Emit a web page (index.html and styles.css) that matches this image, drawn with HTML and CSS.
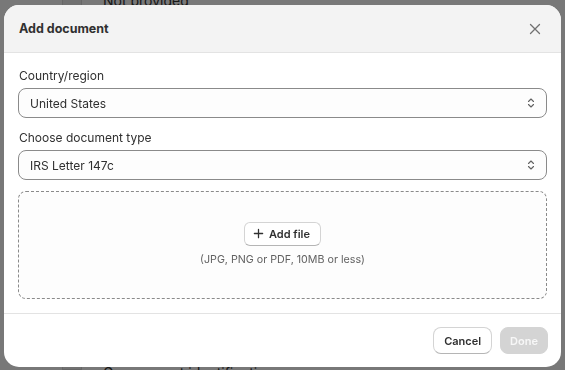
FILE: index.html
```html
<!DOCTYPE html>
<html lang="en">
<head>
  <meta charset="UTF-8" />
  <meta name="viewport" content="width=device-width, initial-scale=1.0"/>
  <title>Add document</title>
  <link rel="stylesheet" href="styles.css">
</head>
<body>
  <div class="page">
    <div class="pageRow">
      <div class="thumb"></div>
      <p>Not provided</p>
    </div>
    <div class="pageRow bottom">
      <div class="thumb"></div>
      <p>Government identification</p>
    </div>
  </div>

  <div class="overlay">
    <div class="modal">
      <div class="modalHeader">
        <h2>Add document</h2>
        <button class="closeBtn" aria-label="Close">
          <svg width="12" height="12" viewBox="0 0 12 12"><path d="M1.5 1.5l9 9M10.5 1.5l-9 9" stroke="#707070" stroke-width="1.3" stroke-linecap="round"/></svg>
        </button>
      </div>

      <div class="modalBody">
        <div class="field">
          <label>Country/region</label>
          <div class="select">
            <span>United States</span>
            <svg width="10" height="14" viewBox="0 0 10 14"><path d="M2.5 5.5L5 3l2.5 2.5M2.5 8.5L5 11l2.5-2.5" fill="none" stroke="#616161" stroke-width="1.1" stroke-linecap="round" stroke-linejoin="round"/></svg>
          </div>
        </div>

        <div class="field">
          <label>Choose document type</label>
          <div class="select">
            <span>IRS Letter 147c</span>
            <svg width="10" height="14" viewBox="0 0 10 14"><path d="M2.5 5.5L5 3l2.5 2.5M2.5 8.5L5 11l2.5-2.5" fill="none" stroke="#616161" stroke-width="1.1" stroke-linecap="round" stroke-linejoin="round"/></svg>
          </div>
        </div>

        <div class="dropzone">
          <button class="addFile">
            <svg width="11" height="11" viewBox="0 0 12 12"><path d="M6 1.5v9M1.5 6h9" stroke="#303030" stroke-width="1.4" stroke-linecap="round"/></svg>
            Add file
          </button>
          <p class="hint">(JPG, PNG or PDF, 10MB or less)</p>
        </div>
      </div>

      <div class="modalFooter">
        <button class="btn">Cancel</button>
        <button class="btn primary" disabled>Done</button>
      </div>
    </div>
  </div>
</body>
</html>
```

FILE: styles.css
```css
* {
  margin: 0;
  padding: 0;
  box-sizing: border-box;
  font-family: 'Inter', 'Noto Sans', sans-serif;
}

body {
  width: 565px;
  height: 370px;
  overflow: hidden;
  background: #f1f1f1;
  color: #303030;
  font-size: 12px;
}

/* page behind the dialog */
.page {
  padding-left: 62px;
}

.pageRow {
  display: flex;
  align-items: flex-start;
  gap: 21px;
  height: 12px;
}

.pageRow p {
  font-size: 14px;
  line-height: 14px;
  margin-top: -6px;
}

.pageRow.bottom {
  margin-top: 346px;
}

.pageRow.bottom p {
  margin-top: 8px;
}

.thumb {
  width: 20px;
  height: 20px;
  margin-top: -8px;
  background: #e3e3e3;
  border: 1px solid #cfcfcf;
}

.overlay {
  position: fixed;
  inset: 0;
  background: rgba(0, 0, 0, 0.5);
  padding: 5px 4px 3px;
}

.modal {
  background: #fff;
  border-radius: 15px;
  overflow: hidden;
  height: 362px;
  display: flex;
  flex-direction: column;
}

.modalHeader {
  display: flex;
  align-items: center;
  justify-content: space-between;
  background: #f3f3f3;
  border-bottom: 1px solid #e3e3e3;
  height: 48px;
  padding: 0 16px 0 15px;
}

.modalHeader h2 {
  font-size: 12.5px;
  font-weight: 650;
  color: #303030;
}

.closeBtn {
  background: none;
  border: none;
  width: 20px;
  height: 20px;
  display: flex;
  align-items: center;
  justify-content: center;
}

.modalBody {
  padding: 14px 14px 14px;
  display: flex;
  flex-direction: column;
  gap: 11px;
  border-bottom: 1px solid #e3e3e3;
}

.field label {
  display: block;
  line-height: 18px;
  margin: 0 0 3px 1px;
  color: #303030;
}

.select {
  height: 30px;
  border: 1px solid #8a8a8a;
  border-radius: 8px;
  background: #fdfdfd;
  display: flex;
  align-items: center;
  justify-content: space-between;
  padding: 0 10px 0 11px;
}

.dropzone {
  height: 108px;
  border: 1px dashed #8a8a8a;
  border-radius: 8px;
  background: #fdfdfd;
  display: flex;
  flex-direction: column;
  align-items: center;
  justify-content: center;
  gap: 7px;
  padding-bottom: 3px;
}

.addFile {
  display: flex;
  align-items: center;
  gap: 5px;
  height: 24px;
  padding: 0 10px 0 8px;
  background: #fff;
  border: 1px solid #d4d4d4;
  border-bottom-color: #b5b5b5;
  border-radius: 6px;
  font-size: 11px;
  font-weight: 600;
  color: #303030;
}

.hint {
  font-size: 10.7px;
  color: #616161;
}

.modalFooter {
  display: flex;
  justify-content: flex-end;
  gap: 8px;
  padding: 13px 13px;
}

.btn {
  height: 27px;
  padding: 0 10px;
  border-radius: 8px;
  background: #fff;
  border: 1px solid #d4d4d4;
  border-bottom-color: #b5b5b5;
  font-size: 11px;
  font-weight: 600;
  color: #303030;
}

.btn.primary {
  background: #d4d4d4;
  border-color: #d4d4d4;
  color: #f7f7f7;
  padding: 0 9px;
}
```
